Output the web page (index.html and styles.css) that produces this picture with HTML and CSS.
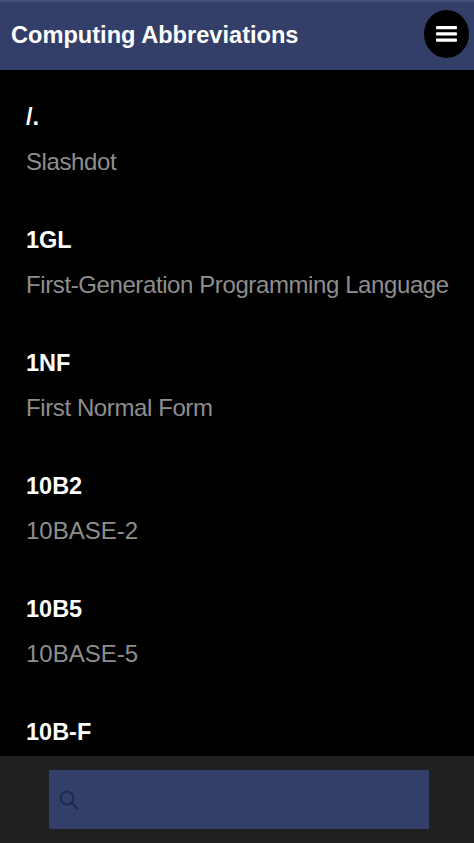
FILE: index.html
```html
<!DOCTYPE html>
<html lang="en">
<head>
<meta charset="utf-8">
<title>Computing Abbreviations</title>
<link rel="stylesheet" href="styles.css">
</head>
<body>
<div class="app">
  <header class="bar">
    <h1 class="title">Computing Abbreviations</h1>
    <button class="menu" aria-label="Menu">
      <svg width="22" height="16" viewBox="0 0 22 16"><rect x="0" y="0" width="21" height="3.2" rx="1" fill="#fff"/><rect x="0" y="6.2" width="21" height="3.2" rx="1" fill="#fff"/><rect x="0" y="12.6" width="21" height="3.2" rx="1" fill="#fff"/></svg>
    </button>
  </header>
  <main class="list">
    <section class="item"><h2 class="abbr">/.</h2><p class="full">Slashdot</p></section>
    <section class="item"><h2 class="abbr">1GL</h2><p class="full">First-Generation Programming Language</p></section>
    <section class="item"><h2 class="abbr">1NF</h2><p class="full">First Normal Form</p></section>
    <section class="item"><h2 class="abbr">10B2</h2><p class="full caps">10BASE-2</p></section>
    <section class="item"><h2 class="abbr">10B5</h2><p class="full caps">10BASE-5</p></section>
    <section class="item"><h2 class="abbr">10B-F</h2></section>
  </main>
  <footer class="foot">
    <div class="search">
      <svg width="22" height="22" viewBox="0 0 22 22" fill="none" stroke="#1f2b4e" stroke-width="2.2"><circle cx="9" cy="9" r="6.4"/><path d="M13.6 13.6L20 20"/></svg>
    </div>
  </footer>
</div>
</body>
</html>
```
FILE: styles.css
```css
html, body { margin: 0; padding: 0; background: #000; }
.app {
  width: 474px; height: 843px; overflow: hidden;
  display: flex; flex-direction: column;
  font-family: "Liberation Sans", Arial, sans-serif;
}
.bar {
  flex: none; height: 70px; box-sizing: border-box;
  background: #333f68; border-top: 2px solid #46527a;
  display: flex; align-items: center; justify-content: space-between;
  padding: 0 5px 2px 11px;
}
.title { margin: 0; font-size: 23.6px; font-weight: 700; color: #fff; }
.menu {
  width: 45px; height: 48px; border-radius: 50%; border: 0; padding: 0; margin-bottom: 2px;
  background: #000; display: flex; align-items: center; justify-content: center;
}
.list { flex: 1; min-height: 0; overflow: hidden; padding: 33px 0 0 26px; }
.item { height: 123px; }
.abbr { margin: 0; font-size: 23.5px; line-height: 28px; font-weight: 700; color: #fff; }
.full { margin: 18px 0 0; font-size: 24px; line-height: 28px; letter-spacing: -0.4px; color: #8e8e8e; white-space: nowrap; position: relative; top: -1px; }
.caps { letter-spacing: 0; }
.foot {
  flex: none; height: 87px; background: #202020;
  display: flex; justify-content: center; align-items: flex-start; padding: 14px 0 0 3px; box-sizing: border-box;
}
.search {
  width: 380px; height: 59px; background: #333f68;
  display: flex; align-items: center; padding-left: 9px; box-sizing: border-box;
}
```
